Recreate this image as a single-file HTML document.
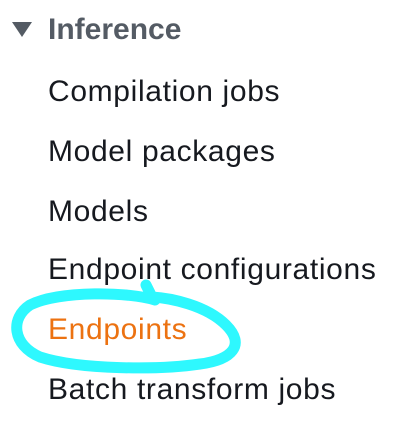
<!DOCTYPE html>
<html><head><meta charset="utf-8"><style>
html,body{margin:0;padding:0;background:#fff;width:416px;height:430px;overflow:hidden;position:relative;font-family:"Liberation Sans",sans-serif}
.t{position:absolute;left:48px;font-size:30px;letter-spacing:0.65px;color:#16191f;white-space:nowrap;line-height:1}
.h{left:48px;font-weight:bold;color:#545b64;letter-spacing:0}
</style></head><body>
<svg width="416" height="430" style="position:absolute;left:0;top:0">
<polygon points="12,22 32,22 22,37" fill="#545b64"/>
<path d="M155,300 C130,292 60,290 30,305 C10,318 12,345 40,357 C80,370 160,370 200,364 C232,360 246,345 226,325 C206,305 170,298 152,297 L146,285" fill="none" stroke="#2ef8fe" stroke-width="11" stroke-linecap="round" stroke-linejoin="round"/>
</svg>
<div class="t h" style="top:15px">Inference</div>
<div class="t" style="top:77px">Compilation jobs</div>
<div class="t" style="top:137px">Model packages</div>
<div class="t" style="top:197px">Models</div>
<div class="t" style="top:255px">Endpoint configurations</div>
<div class="t" style="top:315px;color:#ec7211">Endpoints</div>
<div class="t" style="top:375px">Batch transform jobs</div>
</body></html>
